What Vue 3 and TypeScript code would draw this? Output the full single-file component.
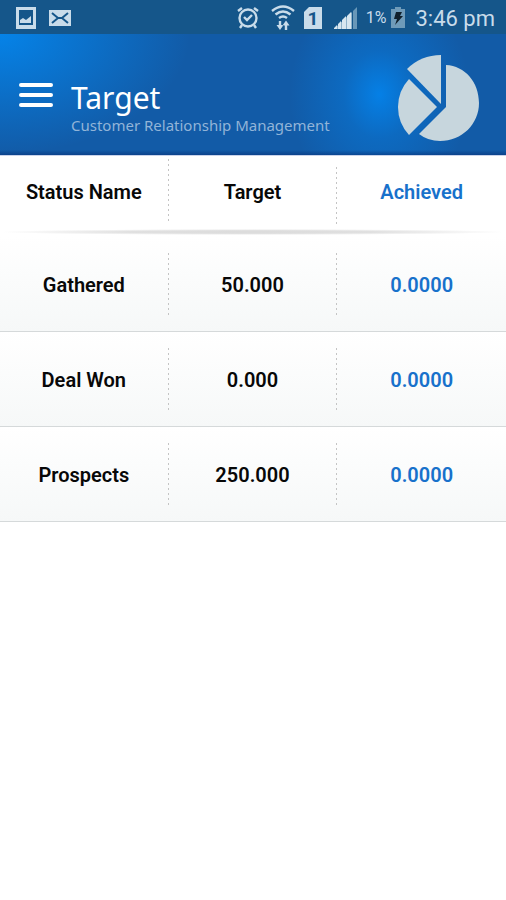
<script setup lang="ts">
interface TargetRow {
  status: string
  target: string
  achieved: string
}

const rows: TargetRow[] = [
  { status: 'Gathered', target: '50.000', achieved: '0.0000' },
  { status: 'Deal Won', target: '0.000', achieved: '0.0000' },
  { status: 'Prospects', target: '250.000', achieved: '0.0000' },
]
</script>

<template>
  <div class="screen">
    <div class="status-bar">
      <div class="notifications">
        <svg width="20" height="22" viewBox="0 0 20 22" aria-hidden="true">
          <path fill="#c9dcea" fill-rule="evenodd" d="M0 0h20v22H0zM3 3v15h14V3z" />
          <path fill="#c9dcea" d="M4 16v-3l3-2 3 2 5-4v7z" />
        </svg>
        <svg width="22" height="16" viewBox="0 0 22 16" aria-hidden="true">
          <path fill="#c9dcea" d="M0 0h22v16H0z" />
          <path fill="none" stroke="#15568a" stroke-width="2" d="M3 3l6 5h4l6-5M3 13l6-5M19 13l-6-5" />
        </svg>
      </div>
      <div class="indicators">
        <svg width="22" height="23" viewBox="0 0 22 23" fill="none" stroke="#c9dcea" stroke-width="2.4" aria-hidden="true">
          <circle cx="11" cy="12" r="8.5" />
          <path d="M7 11l3 3 5-5M1 5l4-3M21 5l-4-3M5 19l-2 3M17 19l2 3" />
        </svg>
        <svg class="wifi" width="24" height="25" viewBox="0 0 24 25" fill="none" stroke="#c9dcea" stroke-width="2.4" aria-hidden="true">
          <path d="M1 6Q12-3 23 6M4.500 9.500q7.500-6 15 0M8 13q4-3 8 0" />
          <path d="M9 16v5M15 25v-5" />
          <path fill="#c9dcea" stroke="none" d="M5.500 20h7l-3.500 5zM11.500 20.500h7l-3.500-5z" />
        </svg>
        <svg class="sim" width="18" height="22" viewBox="0 0 18 22" aria-hidden="true">
          <path fill="#c9dcea" d="M5 0h13v22H0V5z" />
          <text class="sim-digit" x="9" y="18" text-anchor="middle">1</text>
        </svg>
        <svg class="signal" width="24" height="22" viewBox="0 0 24 22" aria-hidden="true">
          <path fill="#8fb2ca" d="M0 22L18 5v17z" />
          <path fill="#d8e6ef" d="M0 22v-1l3-3v4zM4 22v-5l3-3v8zM8 22v-9l4-4v13zM13 22V9l4-4v17z" />
          <path fill="#6897b8" d="M19 22V4l4-4v22z" />
        </svg>
        <span class="battery-level">1%</span>
        <svg class="battery" width="14" height="21" viewBox="0 0 14 21" aria-hidden="true">
          <path fill="#6f9bb9" d="M4 0h6v2h4v19H0V2h4z" />
          <path fill="#10202c" d="M5 5h6l-2 4h3l-8 9 2-6H3z" />
        </svg>
        <span class="clock">3:46 pm</span>
      </div>
    </div>

    <header class="app-header">
      <button class="menu-button" type="button" aria-label="Menu">
        <span class="menu-line"></span>
        <span class="menu-line"></span>
        <span class="menu-line"></span>
      </button>
      <div class="titles">
        <h1 class="title">Target</h1>
        <p class="subtitle">Customer Relationship Management</p>
      </div>
      <svg class="pie" width="84" height="88" viewBox="0 0 84 88" fill="#c7d6dd" aria-hidden="true">
        <path d="M44 1V50L10 15Q24 1 44 1z" />
        <path d="M12 25L40 53L12 81Q1 69 1 53Q1 37 12 25z" />
        <path d="M49 11C68 12 82 28 82 49C82 70 65 87 43 87Q31 87 22 80L49 53z" />
      </svg>
    </header>

    <table class="targets">
      <thead>
        <tr>
          <th scope="col"><div class="cell"><span class="label">Status Name</span><span class="divider"></span></div></th>
          <th scope="col"><div class="cell"><span class="label">Target</span><span class="divider low"></span></div></th>
          <th scope="col" class="achieved"><div class="cell"><span class="label">Achieved</span></div></th>
        </tr>
      </thead>
      <tbody>
        <tr v-for="row in rows" :key="row.status">
          <td><div class="cell"><span class="label">{{ row.status }}</span><span class="divider"></span></div></td>
          <td><div class="cell"><span class="label">{{ row.target }}</span><span class="divider"></span></div></td>
          <td class="achieved"><div class="cell"><span class="label">{{ row.achieved }}</span></div></td>
        </tr>
      </tbody>
    </table>
  </div>
</template>

<style>
body {
  background: #fff;
}
</style>

<style scoped>
.screen {
  min-height: 100vh;
  background: #fff;
  font-family: Roboto, "Liberation Sans", sans-serif;
}

.status-bar {
  display: flex;
  justify-content: space-between;
  align-items: center;
  box-sizing: border-box;
  height: 34px;
  padding: 1px 11px 0 16px;
  background: #15568a;
  color: #c9dcea;
}

.notifications,
.indicators {
  display: flex;
  align-items: center;
}

.notifications {
  gap: 13px;
}

.wifi {
  margin-left: 12px;
}

.sim {
  margin-left: 9px;
}

.signal {
  margin-left: 12px;
}

.sim-digit {
  font: 700 19px Roboto, sans-serif;
  fill: #15568a;
}

.battery-level {
  margin-left: 8px;
  font-size: 16px;
  line-height: 32px;
}

.battery {
  margin-left: 5px;
}

.clock {
  margin-left: 10px;
  padding-top: 2px;
  font-size: 22px;
  line-height: 30px;
}

.app-header {
  display: flex;
  align-items: center;
  box-sizing: border-box;
  height: 122px;
  padding: 0 25px 0 19px;
  border-bottom: 1px solid #c9d3ea;
  background:
    linear-gradient(to top, rgba(8, 50, 120, 0.6), transparent 5px),
    radial-gradient(ellipse 90px 110px at 75% 50%, #0580e6, rgba(5, 128, 230, 0.4) 40%, rgba(5, 128, 230, 0)),
    radial-gradient(ellipse 190px 120px at 0 0, #0583e8, rgba(5, 131, 232, 0)),
    #125ba7;
}

.menu-button {
  display: flex;
  flex-direction: column;
  gap: 6px;
  width: 34px;
  padding: 0;
  border: 0;
  background: none;
}

.menu-line {
  height: 4px;
  border-radius: 2px;
  background: #fff;
}

.titles {
  flex: 1;
  margin-left: 18px;
  padding-top: 28px;
  font-family: "Noto Sans", "Open Sans", sans-serif;
}

.title {
  margin: 0;
  color: #fff;
  font-size: 30px;
  font-weight: 400;
  line-height: 32px;
}

.subtitle {
  margin: 0;
  color: #91b4d8;
  font-size: 15px;
  line-height: 22px;
  white-space: nowrap;
}

.pie {
  margin-top: 6px;
}

.targets {
  width: 100%;
  border-collapse: collapse;
  table-layout: fixed;
  color: #080808;
  font-size: 20px;
  text-align: center;
}

.targets th,
.targets td {
  padding: 0;
  font-weight: 600;
}

.targets thead tr {
  background: radial-gradient(ellipse 50% 3px at 50% 76px, #dadada, #e0e0e0 50%, rgba(255, 255, 255, 0)) no-repeat;
}

.targets th {
  padding: 3px 0 14px;
}

.targets td {
  padding: 16px 0 14px;
}

.targets tbody tr {
  border-bottom: 1px solid #d5d9da;
  background: linear-gradient(#fff, #f6f8f8);
}

.cell {
  display: flex;
  height: 64px;
  line-height: 65px;
}

.targets th .cell {
  line-height: 66px;
}

.label {
  flex: 1;
}

.divider {
  width: 1px;
  background: repeating-linear-gradient(#c4c4c4 0 2px, transparent 2px 5px);
}

.divider.low {
  margin: 8px 0 -4px;
}

.targets .achieved {
  color: #1871cb;
}
</style>
